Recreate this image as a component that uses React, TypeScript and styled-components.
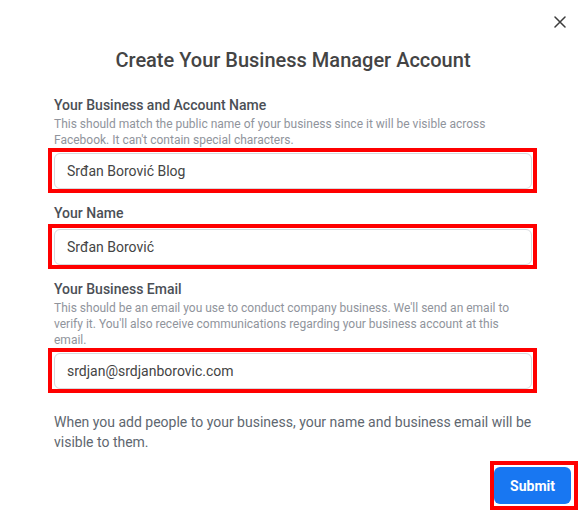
import styled, { createGlobalStyle } from "styled-components";

const GlobalStyle = createGlobalStyle`
  * {
    box-sizing: border-box;
  }
  body {
    margin: 0;
    background: #ffffff;
    font-family: Roboto, "Liberation Sans", Arial, sans-serif;
  }
`;

interface FieldProps {
  label: string;
  description?: string;
  value: string;
}

const Field = (props: FieldProps) => {
  const { label, description, value } = props;
  return (
    <FieldContainer>
      <FieldLabel>{label}</FieldLabel>
      {description && <FieldDescription>{description}</FieldDescription>}
      <Highlight>
        <TextInput defaultValue={value} readOnly />
      </Highlight>
    </FieldContainer>
  );
};

const App = () => {
  return (
    <>
      <GlobalStyle />
      <Dialog>
        <CloseRow>
          <CloseButton aria-label="Close">
            <svg width="12" height="12" viewBox="0 0 12 12">
              <path
                d="M1 1 L11 11 M11 1 L1 11"
                stroke="#3c3c3c"
                strokeWidth="1.5"
                strokeLinecap="round"
              />
            </svg>
          </CloseButton>
        </CloseRow>
        <Title>Create Your Business Manager Account</Title>
        <Form>
          <Field
            label="Your Business and Account Name"
            description="This should match the public name of your business since it will be visible across Facebook. It can't contain special characters."
            value="Srđan Borović Blog"
          />
          <Field label="Your Name" value="Srđan Borović" />
          <Field
            label="Your Business Email"
            description="This should be an email you use to conduct company business. We'll send an email to verify it. You'll also receive communications regarding your business account at this email."
            value="srdjan@srdjanborovic.com"
          />
        </Form>
        <Notice>
          When you add people to your business, your name and business email
          will be visible to them.
        </Notice>
        <Footer>
          <ButtonHighlight>
            <SubmitButton>Submit</SubmitButton>
          </ButtonHighlight>
        </Footer>
      </Dialog>
    </>
  );
};

export default App;

const Dialog = styled.div`
  width: 586px;
  height: 510px;
  background: #ffffff;
  display: flex;
  flex-direction: column;
  overflow: hidden;
`;

const CloseRow = styled.div`
  display: flex;
  justify-content: flex-end;
  padding: 16px 20px 0 0;
`;

const CloseButton = styled.button`
  width: 12px;
  height: 12px;
  padding: 0;
  border: none;
  background: none;
  display: flex;
  cursor: pointer;
`;

const Title = styled.h1`
  margin: 20px 0 0;
  text-align: center;
  color: #444444;
  font-size: 20px;
  font-weight: 500;
  line-height: 24px;
`;

const Form = styled.div`
  margin-top: 24px;
  padding: 0 54px;
  display: flex;
  flex-direction: column;
  gap: 11px;
`;

const FieldContainer = styled.div`
  display: flex;
  flex-direction: column;
`;

const FieldLabel = styled.label`
  color: #4b4f56;
  font-size: 14px;
  font-weight: 500;
  line-height: 18px;
`;

const FieldDescription = styled.p`
  margin: 2px 0 -2px;
  color: #90949c;
  font-size: 12px;
  font-weight: 400;
  line-height: 16px;
`;

const Highlight = styled.div`
  margin: 2px -5px 0 -6px;
  padding: 1px 1px 0 2px;
  border: 4px solid #ff0000;
`;

const TextInput = styled.input`
  display: block;
  width: 100%;
  height: 36px;
  padding: 0 12px;
  border: 1px solid #d6d9dd;
  border-radius: 6px;
  background: #ffffff;
  color: #444444;
  font-family: inherit;
  font-size: 14px;
  outline: none;
`;

const Notice = styled.p`
  margin: 19px 0 0;
  padding: 0 54px;
  color: #606770;
  font-size: 14px;
  line-height: 20px;
`;

const Footer = styled.div`
  margin-top: 9px;
  padding-right: 8px;
  display: flex;
  justify-content: flex-end;
`;

const ButtonHighlight = styled.div`
  padding: 2px 3px 2px 0;
  border: 4px solid #ff0000;
`;

const SubmitButton = styled.button`
  width: 77px;
  height: 37px;
  border: none;
  border-radius: 6px;
  background: #1877f2;
  color: #ffffff;
  font-family: inherit;
  font-size: 14px;
  font-weight: 700;
  cursor: pointer;
`;
